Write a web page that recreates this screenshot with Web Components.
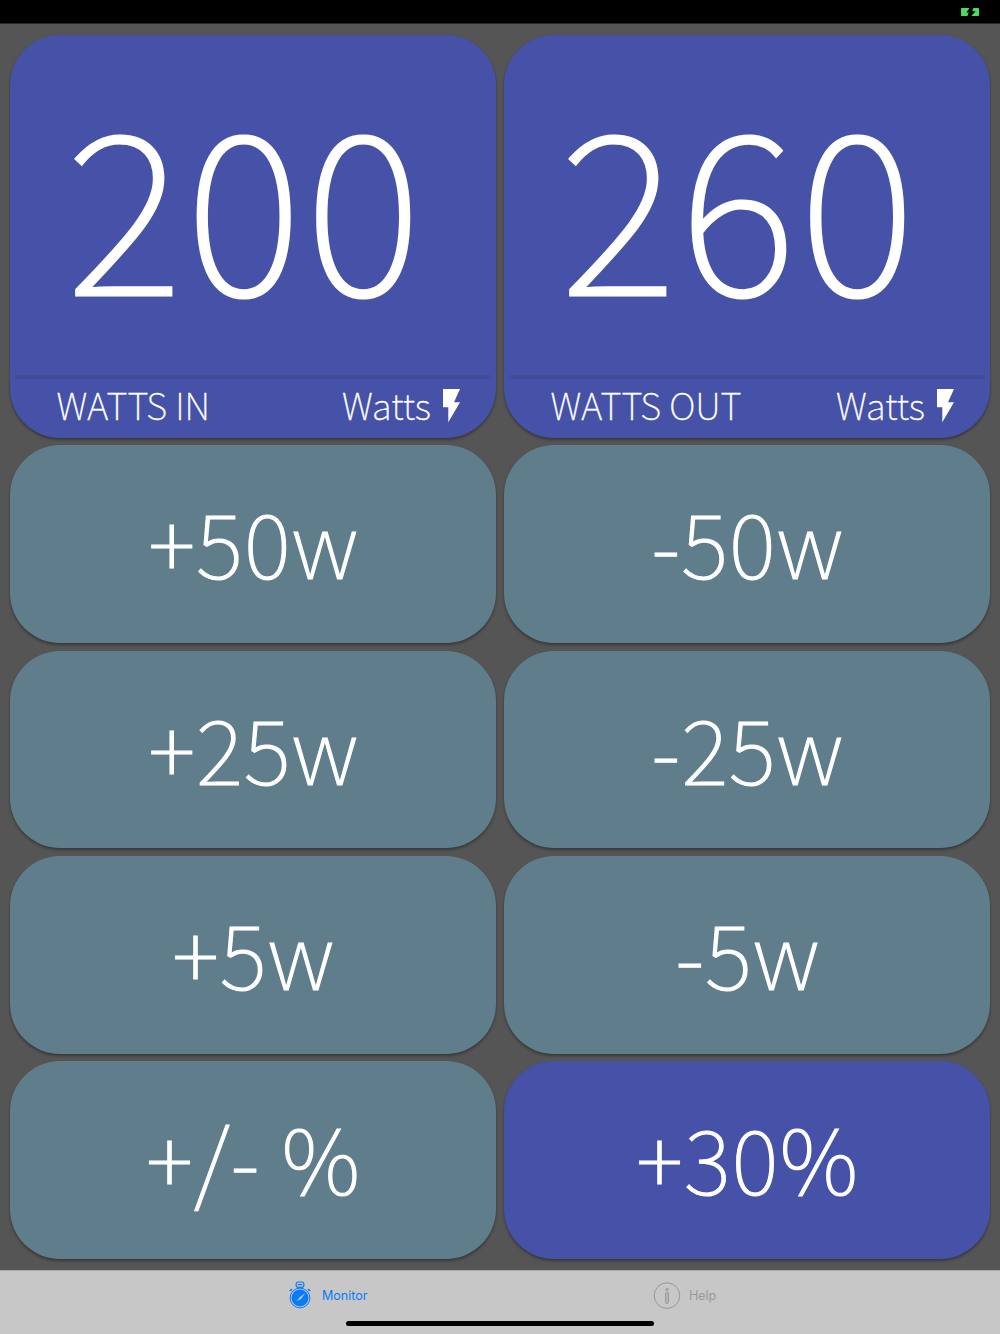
<!DOCTYPE html>
<html lang="en">
<head>
<meta charset="utf-8">
<title>Watts Monitor</title>
<style>
html,body{margin:0;height:100%}
body{background:#555;overflow:hidden}
</style>
</head>
<body>
<watts-app></watts-app>
<script>
const define=(name,html)=>customElements.define(name,class extends HTMLElement{
  constructor(){
    super();
    const t=document.createElement('template');
    t.innerHTML=html;
    this.attachShadow({mode:'open'}).append(t.content.cloneNode(true));
  }
});

define('status-bar',`
<style>
:host{display:flex;justify-content:flex-end;box-sizing:border-box;height:24px;background:#000;padding:8px 21px 0 0;border-bottom:1px solid #2a2a2a}
svg{display:block}
</style>
<svg width="19" height="8" viewBox="0 0 19 8">
  <path fill="#4cd964" d="M1.8 0H9.6L6.4 4.6H8.8L7.4 8H1.8Q1 8 1 7.2V.8Q1 0 1.8 0Z"/>
  <path fill="#4cd964" d="M13.4 0H18.1Q19 0 19 .8V7.2Q19 8 18.1 8H11.4L15.6 3.2H12.2Z"/>
</svg>`);

define('power-bolt',`
<style>:host{display:block;width:17px;height:34px}svg{display:block}</style>
<svg width="17" height="34" viewBox="0 0 17 34"><path fill="#fff" d="M0 0H17L11 13.3H17L5.3 33.3V18.3H0Z"/></svg>`);

define('watt-card',`
<style>
:host{display:flex;flex-direction:column;box-sizing:border-box;background:#4552a7;border-radius:50px;box-shadow:0 2px 3px rgba(0,0,0,.35);color:#fff;padding:0 5px}
.value{height:339.3px;box-sizing:border-box;padding-left:51.6px;font-size:221.5px;line-height:327.5px;letter-spacing:4.1px;-webkit-text-stroke:3px #fff;white-space:nowrap}
.rule{height:4px;background:#404d98;flex:none}
.foot{display:flex;height:51px;padding:0 31.4px 0 41.5px;font-size:36.5px;line-height:52px;-webkit-text-stroke:.5px #fff;white-space:nowrap}
.unit{margin-left:auto;margin-right:11.6px;letter-spacing:.15px}
power-bolt{margin-top:10px}
</style>
<div class="value"><slot name="value"></slot></div>
<div class="rule"></div>
<div class="foot"><span><slot name="label"></slot></span><span class="unit"><slot name="unit"></slot></span><power-bolt></power-bolt></div>`);

define('step-button',`
<style>
:host{display:flex;justify-content:center;box-sizing:border-box;background:#607d8b;border-radius:50px;box-shadow:0 2px 3px rgba(0,0,0,.35);color:#fff;font-size:89.3px;line-height:190px;letter-spacing:1.2px;padding-left:1.6px;-webkit-text-stroke:1.2px #fff;white-space:pre}
:host([active]){background:#4552a7}
</style>
<span><slot></slot></span>`);

define('icon-stopwatch',`
<style>:host{display:block}svg{display:block}</style>
<svg width="22" height="28" viewBox="0 0 22 28" fill="none" stroke="#087bf9">
  <circle cx="11" cy="17" r="9.9" stroke-width="1"/>
  <circle cx="11" cy="17" r="8.5" fill="#087bf9" stroke="none"/>
  <rect x="7" y="1" width="8" height="5.4" rx="2.7" stroke-width="1.1"/>
  <path d="M8.7 3.7H13.3M9.2 6.2V7.6M12.8 6.2V7.6" stroke-width="1.2"/>
  <path d="M1 10L3 8M21 10L19 8" stroke-width="1.7"/>
  <path d="M16.3 11.9L12.3 17.7A1.6 1.6 0 0 1 10.4 18.6L8.6 20.1 8.1 19.6 9.6 17.8A1.6 1.6 0 0 1 10.7 16.2Z" fill="#b9c5d8" stroke="none"/>
</svg>`);

define('icon-info',`
<style>:host{display:block}svg{display:block}</style>
<svg width="28" height="28" viewBox="0 0 28 28" fill="none" stroke="#999">
  <circle cx="14" cy="14.6" r="12.8" stroke-width="1"/>
  <circle cx="14" cy="8.6" r="1.3" fill="#aaa" stroke-width=".8"/>
  <rect x="12.5" y="11.4" width="3" height="11.2" rx="1.5" fill="#b3b3b3" stroke-width=".9"/>
</svg>`);

define('tab-item',`
<style>
:host{display:flex;align-items:center;flex:none;height:28px;color:#999;font:12.5px/28px Inter,sans-serif}
:host([selected]){color:#087bf9}
span{padding-top:2px}
</style>
<slot name="icon"></slot><span><slot></slot></span>`);

define('tab-bar',`
<style>
:host{display:flex;flex-direction:column;box-sizing:border-box;height:64px;background:#c7c7c7;border-top:1px solid #a9a9a9}
.tabs{display:flex;height:48px;padding:10px 0 0 289px;box-sizing:border-box}
tab-item:first-of-type{width:364px}
icon-stopwatch{margin-right:11px}
icon-info{margin-right:8px}
.home{width:308px;height:5px;border-radius:3px;background:#000;margin:2px auto 0}
</style>
<div class="tabs">
<tab-item selected><icon-stopwatch slot="icon"></icon-stopwatch>Monitor</tab-item>
<tab-item><icon-info slot="icon"></icon-info>Help</tab-item>
</div>
<div class="home"></div>`);

define('watts-app',`
<style>
:host{display:flex;flex-direction:column;height:1334px;width:1000px;font-family:"Noto Sans CJK JP",sans-serif;font-weight:100}
main{flex:1;display:grid;grid-template-columns:486px 486px;grid-template-rows:402.3px repeat(4,197.6px);column-gap:8px;row-gap:7.7px;padding:11.4px 10px 0;box-sizing:border-box}
</style>
<status-bar></status-bar>
<main>
<watt-card><span slot="value">200</span><span slot="label">WATTS IN</span><span slot="unit">Watts</span></watt-card>
<watt-card><span slot="value">260</span><span slot="label">WATTS OUT</span><span slot="unit">Watts</span></watt-card>
<step-button>+50w</step-button><step-button>-50w</step-button>
<step-button>+25w</step-button><step-button>-25w</step-button>
<step-button>+5w</step-button><step-button>-5w</step-button>
<step-button>+/- %</step-button><step-button active>+30%</step-button>
</main>
<tab-bar></tab-bar>`);
</script>
</body>
</html>
